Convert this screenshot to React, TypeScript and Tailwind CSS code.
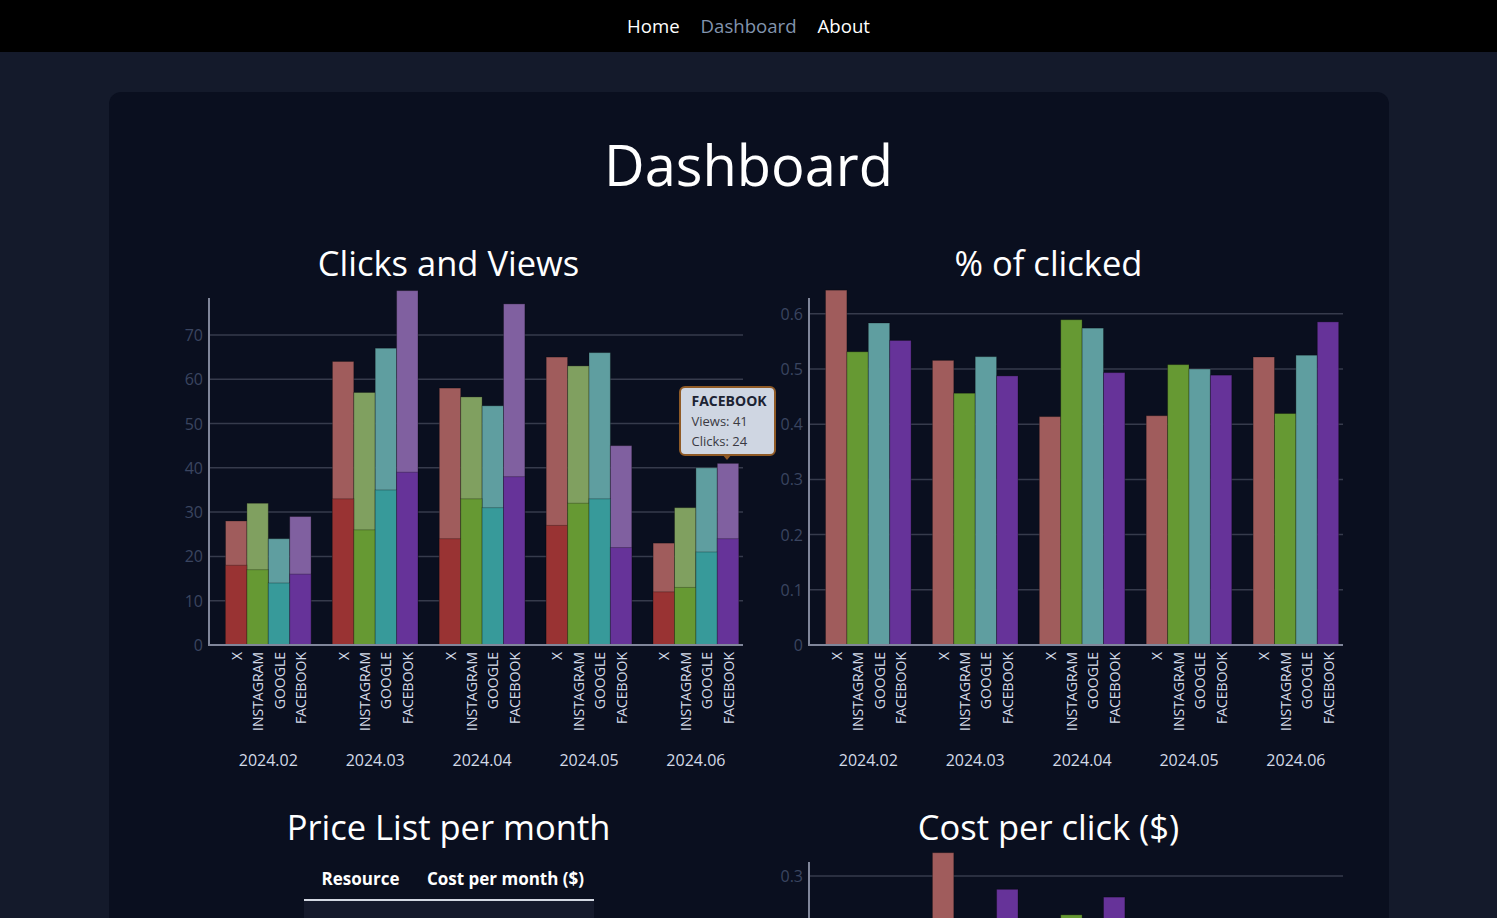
import React from "react";

const CATS = ["X", "INSTAGRAM", "GOOGLE", "FACEBOOK"];
const MONTHS = ["2024.02", "2024.03", "2024.04", "2024.05", "2024.06"];
const VIEWS = [
  [28, 32, 24, 29],
  [64, 57, 67, 80],
  [58, 56, 54, 77],
  [65, 63, 66, 45],
  [23, 31, 40, 41],
];
const CLICKS = [
  [18, 17, 14, 16],
  [33, 26, 35, 39],
  [24, 33, 31, 38],
  [27, 32, 33, 22],
  [12, 13, 21, 24],
];
const COST = [
  [0.22, 0.19, 0.24, 0.21],
  [0.321, 0.24, 0.23, 0.288],
  [0.25, 0.265, 0.2, 0.281],
  [0.2, 0.22, 0.18, 0.23],
  [0.25, 0.23, 0.19, 0.2],
];
const VIEW_COLORS = ["#a05c5c", "#80a060", "#5f9ea0", "#8060a0"];
const CLICK_COLORS = ["#993333", "#669933", "#379a9a", "#663399"];
const PCT_COLORS = ["#a05c5c", "#669933", "#5f9ea0", "#663399"];

const AXIS_X = 60;
const GRID_END = 594;
const ZERO_Y = 360;
const AXIS_TOP = 13;
const STEP = 106.9;
const G0 = 76.5;
const BW = 21.4;

function barX(g: number, c: number) {
  return G0 + g * STEP + c * BW;
}

type Bar = { g: number; c: number; v: number; fill: string };

function Chart({
  ticks,
  fmt,
  px,
  bars,
  height = 495,
}: {
  ticks: number[];
  fmt: (n: number) => string;
  px: number;
  bars: Bar[];
  height?: number;
}) {
  return (
    <svg width={600} height={height} className="block">
      {ticks.map((t) => {
        const y = ZERO_Y - t * px;
        return (
          <g key={t}>
            {t !== 0 && (
              <line x1={AXIS_X} x2={GRID_END} y1={y} y2={y} stroke="#363b4c" strokeWidth={1.5} />
            )}
            <text
              x={54}
              y={y}
              textAnchor="end"
              dominantBaseline="central"
              fontSize={16}
              fill="#3a4560"
            >
              {fmt(t)}
            </text>
          </g>
        );
      })}
      {bars.map((b, i) => {
        const h = b.v * px;
        return (
          <rect
            key={i}
            x={barX(b.g, b.c)}
            y={ZERO_Y - h}
            width={BW}
            height={h}
            fill={b.fill}
            stroke="rgba(0,0,0,0.28)"
            strokeWidth={1}
          />
        );
      })}
      <line x1={AXIS_X} x2={AXIS_X} y1={AXIS_TOP} y2={ZERO_Y + 1} stroke="#80869a" strokeWidth={2} />
      <line x1={AXIS_X - 1} x2={GRID_END} y1={ZERO_Y} y2={ZERO_Y} stroke="#80869a" strokeWidth={2} />
      {MONTHS.map((m, g) => (
        <g key={m}>
          {CATS.map((c, ci) => {
            const cx = barX(g, ci) + BW / 2;
            return (
              <text
                key={c}
                x={cx}
                y={367}
                transform={`rotate(-90 ${cx} 367)`}
                textAnchor="end"
                dominantBaseline="central"
                fontSize={14}
                fill="#d3dae8"
              >
                {c}
              </text>
            );
          })}
          <text
            x={barX(g, 0) + 2 * BW}
            y={475}
            textAnchor="middle"
            dominantBaseline="central"
            fontSize={16}
            fill="#d3dae8"
          >
            {m}
          </text>
        </g>
      ))}
    </svg>
  );
}

function ClicksViews() {
  const bars: Bar[] = [];
  VIEWS.forEach((row, g) =>
    row.forEach((v, c) => bars.push({ g, c, v, fill: VIEW_COLORS[c] }))
  );
  CLICKS.forEach((row, g) =>
    row.forEach((v, c) => bars.push({ g, c, v, fill: CLICK_COLORS[c] }))
  );
  return (
    <div className="relative">
      <Chart ticks={[0, 10, 20, 30, 40, 50, 60, 70]} fmt={(n) => String(n)} px={4.43} bars={bars} />
      <div className="absolute left-[530px] top-[101px] w-[97px] h-[70px] rounded-md border-2 border-[#8f5a26] bg-[#cfd6e2] px-[11px] py-[3px] text-[13px] leading-[20px] text-[#3a3a42]">
        <div className="font-bold text-[14px] text-[#1c2333]">FACEBOOK</div>
        <div>Views: 41</div>
        <div>Clicks: 24</div>
        <div className="absolute left-1/2 -translate-x-1/2 top-full w-0 h-0 border-l-[5px] border-r-[5px] border-t-[6px] border-l-transparent border-r-transparent border-t-[#8f5a26]" />
      </div>
    </div>
  );
}

function PctClicked() {
  const bars: Bar[] = [];
  VIEWS.forEach((row, g) =>
    row.forEach((v, c) => bars.push({ g, c, v: CLICKS[g][c] / v, fill: PCT_COLORS[c] }))
  );
  return (
    <Chart
      ticks={[0, 0.1, 0.2, 0.3, 0.4, 0.5, 0.6]}
      fmt={(n) => (n === 0 ? "0" : n.toFixed(1))}
      px={552}
      bars={bars}
    />
  );
}

function CostPerClick() {
  const bars: Bar[] = [];
  COST.forEach((row, g) => row.forEach((v, c) => bars.push({ g, c, v, fill: PCT_COLORS[c] })));
  return (
    <Chart
      ticks={[0, 0.1, 0.2, 0.3]}
      fmt={(n) => (n === 0 ? "0" : n.toFixed(1))}
      px={1110}
      bars={bars}
    />
  );
}

const PRICES = [
  ["X", "350"],
  ["INSTAGRAM", "280"],
  ["GOOGLE", "300"],
  ["FACEBOOK", "330"],
];

function H2({ children }: { children: React.ReactNode }) {
  return <h2 className="text-center text-[34.5px] leading-[44px] text-white">{children}</h2>;
}

export default function App() {
  return (
    <div className="h-screen overflow-hidden bg-[#141a2b] font-['Open_Sans',sans-serif]">
      <nav className="h-[52px] bg-black flex items-center justify-center gap-[21px] text-[18.6px]">
        <span className="text-white">Home</span>
        <span className="text-[#8294ae]">Dashboard</span>
        <span className="text-white">About</span>
      </nav>
      <main className="pt-10">
        <div className="mx-auto w-[1280px] rounded-xl bg-[#0a0f1f] px-10 pt-[42px] pb-16">
          <h1 className="text-center text-[56px] leading-[60px] text-white">Dashboard</h1>
          <div className="mt-[47px] grid grid-cols-[600px_600px]">
            <div>
              <H2>Clicks and Views</H2>
              <ClicksViews />
            </div>
            <div>
              <H2>% of clicked</H2>
              <PctClicked />
            </div>
            <div className="mt-[25px]">
              <H2>Price List per month</H2>
              <table className="mx-auto mt-[10px] w-[290px] text-white">
                <thead>
                  <tr className="border-b-2 border-[#d3d8e2]">
                    <th className="w-[114px] py-2 text-[17px] leading-6 font-bold">Resource</th>
                    <th className="w-[176px] py-2 text-[17px] leading-6 font-bold">Cost per month ($)</th>
                  </tr>
                </thead>
                <tbody>
                  {PRICES.map(([r, p], i) => (
                    <tr key={r} className={i % 2 === 0 ? "bg-[#151a2c]" : ""}>
                      <td className="py-4 text-center text-[16px] leading-6">{r}</td>
                      <td className="py-4 text-center text-[16px] leading-6">{p}</td>
                    </tr>
                  ))}
                </tbody>
              </table>
            </div>
            <div className="mt-[25px]">
              <H2>Cost per click ($)</H2>
              <CostPerClick />
            </div>
          </div>
        </div>
      </main>
    </div>
  );
}
